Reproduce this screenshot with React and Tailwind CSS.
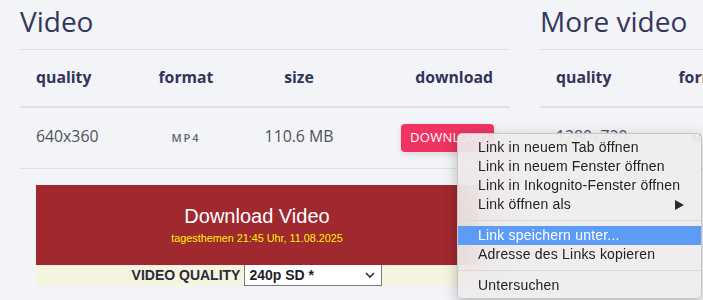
import React from "react";

function Table({ title, rows, showButton }) {
  return (
    <section className="w-[490px] shrink-0">
      <h1 className="h-[50px] pt-[2px] text-[28px] leading-[38px] font-normal text-[#35365c] border-b border-[#e0e1e6]">
        {title}
      </h1>
      <div className="flex h-[58px] items-center border-b-2 border-[#e0e1e6] text-[15.8px] font-bold text-[#33345a]">
        <div className="w-[112px] pl-[16px]">quality</div>
        <div className="w-[108px] text-center">format</div>
        <div className="w-[118px] text-center">size</div>
        <div className="w-[152px] pr-[17px] text-right">download</div>
      </div>
      <div className="flex h-[61px] items-center border-b border-[#e0e1e6] text-[15.8px] text-[#50505e]">
        <div className="w-[112px] pl-[16px] pb-[3px]">{rows[0]}</div>
        <div className="w-[108px] text-center text-[11px] font-semibold tracking-[2px] text-[#5f6478]">{rows[1]}</div>
        <div className="w-[118px] text-center pb-[3px]">{rows[2]}</div>
        <div className="w-[152px] pr-[16px] flex justify-end">
          {showButton && (
            <div className="h-[28px] w-[93px] rounded-[4px] bg-[#ef3462] text-white text-[13px] tracking-[0.3px] flex items-center pl-[9px] shadow-[0_2px_6px_rgba(0,0,0,0.12)]">
              DOWNLOAD
            </div>
          )}
        </div>
      </div>
    </section>
  );
}

function MenuItem({ children, active, arrow }) {
  return (
    <div
      className={
        "h-[19px] flex items-center pl-[20px] pr-[17px] justify-between " +
        (active ? "bg-[#5d9cf6] text-white" : "text-[#232323]")
      }
    >
      <span>{children}</span>
      {arrow && (
        <svg width="9" height="10" viewBox="0 0 9 10">
          <path d="M0 0 L9 5 L0 10 Z" fill="#2a2a2a" />
        </svg>
      )}
    </div>
  );
}

function Sep() {
  return (
    <div className="h-[12px] flex items-center">
      <div className="h-[1px] w-full bg-[#d9d7d8]" />
    </div>
  );
}

export default function App() {
  return (
    <div className="relative w-[703px] h-[300px] overflow-hidden bg-[#f3f4f7] font-['Open_Sans',sans-serif]">
      <div className="flex gap-[30px] pl-[20px]">
        <div className="w-[490px] shrink-0">
          <Table title="Video" rows={["640x360", "MP4", "110.6 MB"]} showButton />
          <div className="ml-[16px] mt-[16px] w-[442px] font-['Liberation_Sans',Arial,sans-serif]">
            <div className="h-[80px] bg-[#a0282f] flex flex-col items-center pt-[20px]">
              <div className="text-white text-[20px] leading-[23px]">Download Video</div>
              <div className="text-[#fff200] text-[10.8px] leading-[12px] mt-[4px]">
                tagesthemen 21:45 Uhr, 11.08.2025
              </div>
            </div>
            <div className="h-[21px] bg-[#f5f4df] flex justify-center items-stretch gap-[4px]">
              <div className="text-[14px] font-bold text-[#2b2b38] flex items-center">VIDEO QUALITY</div>
              <div className="w-[138px] bg-white border-x border-b border-[#7a7a7a] flex items-center justify-between pl-[4px] pr-[6px]">
                <span className="text-[14px] font-bold text-[#1f1f2a]">240p SD *</span>
                <svg width="10" height="7" viewBox="0 0 10 7">
                  <path d="M1 1 L5 5 L9 1" stroke="#333" strokeWidth="1.6" fill="none" />
                </svg>
              </div>
            </div>
          </div>
        </div>
        <Table title="More video" rows={["1280x720", "MP4", "224.1 MB"]} />
      </div>

      <div className="absolute left-[457px] top-[133px] w-[245px] h-[166px] rounded-[5px] border border-[#c9c7c8] bg-[rgba(238,236,236,0.88)] backdrop-blur-xl shadow-[0_4px_14px_rgba(0,0,0,0.25)] pt-[4px] font-['Liberation_Sans',Arial,sans-serif] text-[14px] tracking-[0.2px] leading-[19px]">
        <MenuItem>Link in neuem Tab öffnen</MenuItem>
        <MenuItem>Link in neuem Fenster öffnen</MenuItem>
        <MenuItem>Link in Inkognito-Fenster öffnen</MenuItem>
        <MenuItem arrow>Link öffnen als</MenuItem>
        <Sep />
        <MenuItem active>Link speichern unter...</MenuItem>
        <MenuItem>Adresse des Links kopieren</MenuItem>
        <Sep />
        <MenuItem>Untersuchen</MenuItem>
      </div>
    </div>
  );
}
